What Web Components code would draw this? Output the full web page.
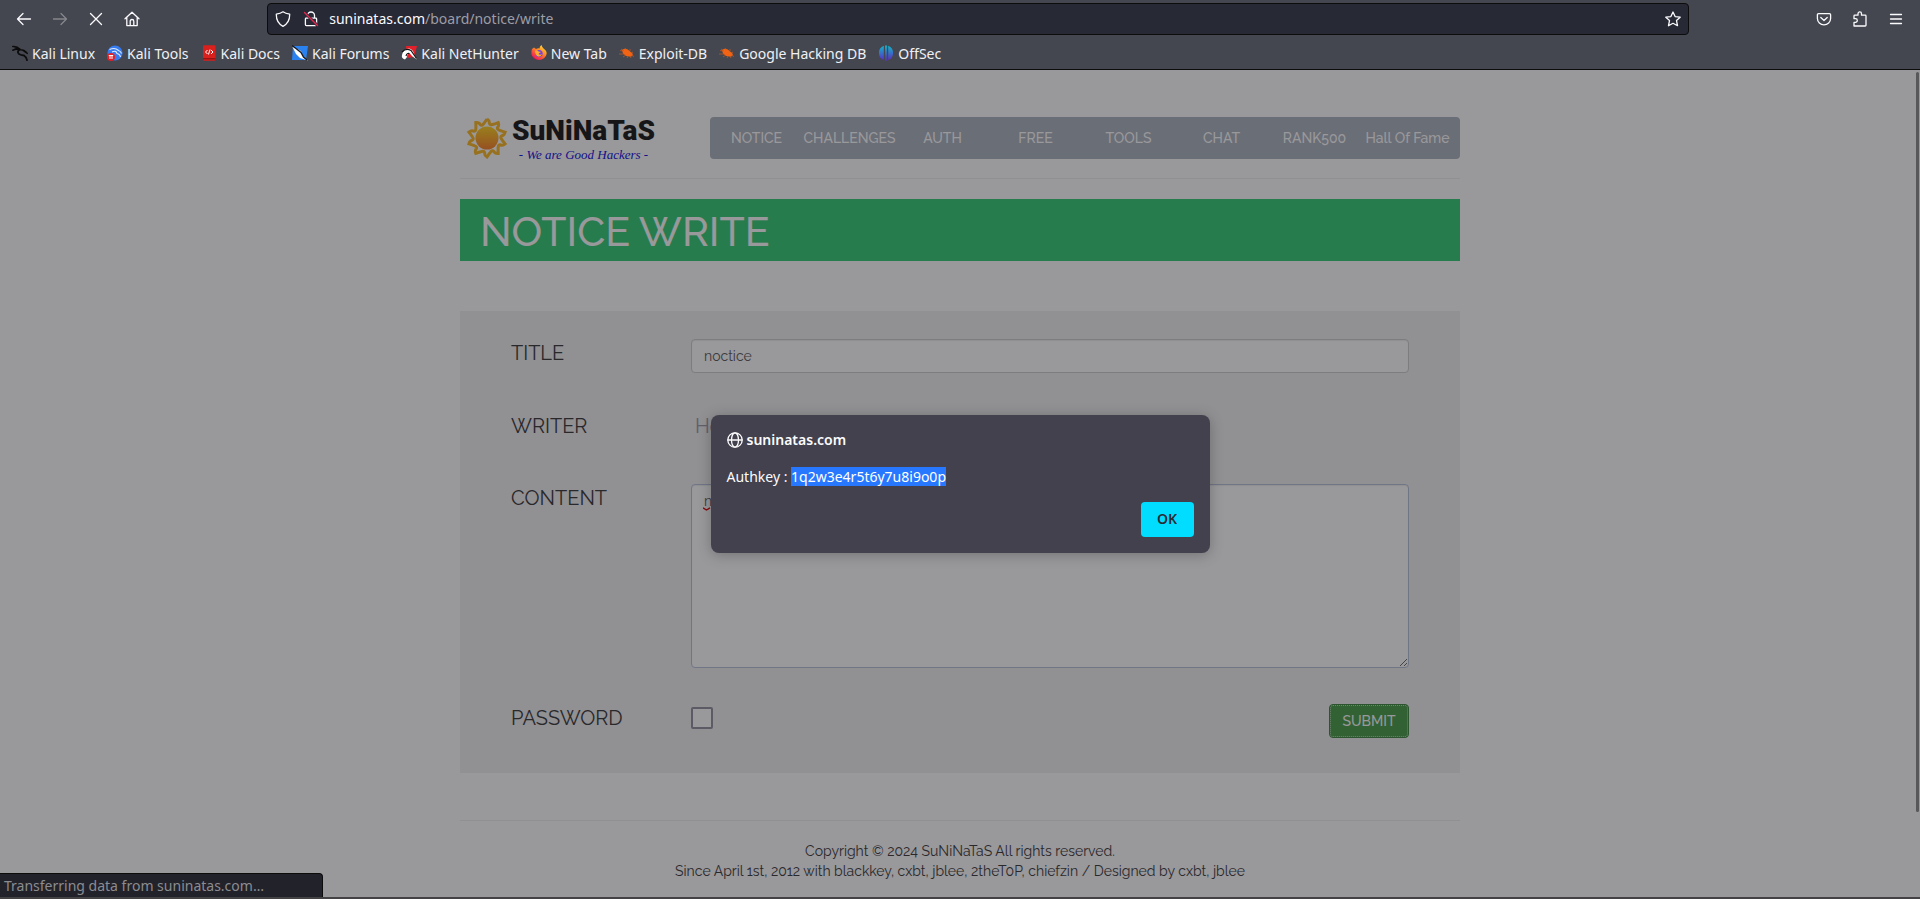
<!DOCTYPE html>
<html lang="en">
<head>
<meta charset="utf-8">
<title>suninatas.com/board/notice/write</title>
<style>
  html, body { margin: 0; height: 100%; }
  body { font-family: "Noto Sans", sans-serif; font-size: 14px; background: #444245; }
</style>
</head>
<body>
<browser-window>
  <nav-toolbar slot="bar"></nav-toolbar>
  <bookmark-bar slot="bar">
    <bookmark-item icon="dragon">Kali Linux</bookmark-item>
    <bookmark-item icon="tools">Kali Tools</bookmark-item>
    <bookmark-item icon="docs">Kali Docs</bookmark-item>
    <bookmark-item icon="forums">Kali Forums</bookmark-item>
    <bookmark-item icon="hunter">Kali NetHunter</bookmark-item>
    <bookmark-item icon="firefox">New Tab</bookmark-item>
    <bookmark-item icon="bug">Exploit-DB</bookmark-item>
    <bookmark-item icon="bug">Google Hacking DB</bookmark-item>
    <bookmark-item icon="offsec">OffSec</bookmark-item>
  </bookmark-bar>
  <site-page>
    <site-header></site-header>
    <page-banner>NOTICE WRITE</page-banner>
    <notice-form></notice-form>
    <site-footer></site-footer>
  </site-page>
  <alert-dialog slot="over" origin="suninatas.com">Authkey : <mark>1q2w3e4r5t6y7u8i9o0p</mark></alert-dialog>
  <status-panel slot="over">Transferring data from suninatas.com…</status-panel>
</browser-window>

<script>
const stroke = 'fill="none" stroke="currentColor" stroke-linecap="round" stroke-linejoin="round"';
const define = (name, html, setup) => {
  const template = document.createElement('template');
  template.innerHTML = html;
  customElements.define(name, class extends HTMLElement {
    constructor() {
      super();
      this.attachShadow({ mode: 'open' }).append(template.content.cloneNode(true));
    }
    connectedCallback() { if (setup) setup(this, this.shadowRoot); }
  });
};

define('browser-window', `
<style>
  :host { display: flex; flex-direction: column; min-height: 100vh; box-sizing: border-box; padding-bottom: 2px; }
  .view { position: relative; flex: 1; background: #fff; border-top: 1px solid #0c0c0d; }
  .thumb { position: absolute; z-index: 2; top: 2px; right: 1px; width: 3px; height: calc(90% - 4px); border-radius: 2px; background: #58585a; }
</style>
<slot name="bar"></slot>
<div class="view"><slot></slot><slot name="over"></slot><div class="thumb"></div></div>`);

define('nav-toolbar', `
<style>
  :host { display: flex; align-items: center; height: 37px; padding: 0 6px; background: #44474f; color: #fbfbfe; }
  button { width: 36px; height: 36px; padding: 0; border: 0; background: none; color: inherit; display: grid; place-items: center; }
  button:disabled { color: #85878c; }
  svg { display: block; }
  .gap { flex: 1; }
  .url { flex: 12; display: flex; align-items: center; box-sizing: border-box; height: 32px; padding: 0 6px 0 7px; border: 1px solid #0c0c0d; border-radius: 4px; background: #272935; }
  .id { display: flex; gap: 12px; margin-right: 10px; }
  .addr { flex: 1; color: #9d9da5; line-height: 20px; }
  b { font-weight: 400; color: #fbfbfe; }
  .url button { width: 18px; }
</style>
<button aria-label="Back"><svg width="16" height="16" ${stroke} stroke-width="1.3"><path d="M7 2.5 1.5 8 7 13.500M1.500 8H14.500"/></svg></button>
<button aria-label="Forward" disabled><svg width="16" height="16" ${stroke} stroke-width="1.3"><path d="M9 2.500 14.500 8 9 13.500M1.500 8H14.500"/></svg></button>
<button aria-label="Stop"><svg width="16" height="16" ${stroke} stroke-width="1.3"><path d="M2.500 2.500 13.500 13.500M13.500 2.500 2.500 13.500"/></svg></button>
<button aria-label="Home"><svg width="16" height="16" ${stroke} stroke-width="1.3"><path d="M1 7.800 8 1.200 15 7.800M2.800 6.500V14.600H13.200V6.500M6.200 14.500V10.200Q6.200 8.500 8 8.500T9.800 10.200V14.500"/></svg></button>
<span class="gap"></span>
<div class="url">
  <span class="id">
    <svg width="16" height="16" ${stroke} stroke-width="1.3"><path d="M8 .8C6 2.300 3.600 2.900 1.300 3.200 1.200 8.800 3.200 13 8 15.300 12.800 13 14.800 8.800 14.700 3.200 12.400 2.900 10 2.300 8 .8Z"/></svg>
    <svg width="16" height="16" ${stroke} stroke-width="1.3"><path d="M4.500 7V4.500a3.500 3.500 0 0 1 7 0V7M3.200 7.200H12.800Q13.600 7.200 13.600 8V13.600Q13.600 14.600 12.600 14.600H3.400Q2.400 14.600 2.400 13.600V8Q2.400 7.200 3.200 7.200"/><path stroke="#272935" stroke-width="3" d="M2 2 14 14"/><path stroke="#e22850" stroke-width="1.400" d="M1.500 1.500 14.500 14.500"/></svg>
  </span>
  <span class="addr"><b>suninatas.com</b>/board/notice/write</span>
  <button aria-label="Bookmark this page"><svg width="16" height="16" ${stroke} stroke-width="1.3"><path d="M8 1 10.100 5.600 15.200 6.200 11.500 9.600 12.500 14.700 8 12.300 3.500 14.700 4.500 9.600.8 6.200 5.900 5.600Z"/></svg></button>
</div>
<span class="gap"></span>
<button aria-label="Save to Pocket"><svg width="16" height="16" ${stroke} stroke-width="1.3"><path d="M2.500 2.600H13.500Q14.600 2.600 14.600 3.700V7.500A6.600 6.300 0 0 1 1.400 7.500V3.700Q1.400 2.600 2.500 2.600ZM4.800 6.500 8 9.500 11.200 6.500"/></svg></button>
<button aria-label="Extensions"><svg width="16" height="16" ${stroke} stroke-width="1.3"><path d="M2 15V11.300H3.500A1.700 1.700 0 0 0 3.500 7.700H2V5Q2 4.200 2.800 4.200H6V2.700A1.700 1.700 0 0 1 9.500 2.700V4.200H13.200Q14 4.200 14 5V14.200Q14 15 13.200 15Z"/></svg></button>
<button aria-label="Menu"><svg width="16" height="16" ${stroke} stroke-width="1.3"><path d="M2.500 3.500H13.500M2.500 8H13.500M2.500 12.500H13.500"/></svg></button>`);

define('bookmark-bar', `
<style>
  :host { display: flex; align-items: center; gap: 12px; height: 32px; padding: 0 12px; background: #44474f; color: #f0f0f4; }
</style><slot></slot>`);

const icons = {
  dragon: '<g fill="none" stroke="#0c0c0c" stroke-linecap="round"><path stroke-width="1.600" d="M.8 1.500Q5 1 8 4.200M.8 5.200Q4 3.500 8 4.800Q12 4.500 14.500 7.500"/><path stroke-width="1.800" d="M7.500 4.500Q4.500 7 7 9 9 10.300 12 10.500 14.500 12 15 15.200"/><path stroke-width="1.200" d="M11 5.500Q13 7 15.500 8.500M3 3 6 4"/></g>',
  tools: '<circle cx="8" cy="8" r="7.600" fill="#367bf0"/><path d="M2.500 4.500Q8 2 11.500 5.500 14 6.500 14.500 8.500M5 7Q9 5 10 8.500 13 9 13.500 12" fill="none" stroke="#dfeaff" stroke-width="1.100"/><circle cx="4" cy="12" r="4" fill="#e22028"/><path d="M1.800 10.500H6.200M3 10.500V14M5 10.500V14" stroke="#fff"/>',
  docs: '<rect x="2" y=".2" width="12.500" height="15.600" rx="1" fill="#d9201c"/><path d="M2 13.800H14.500" stroke="#7c0d0d"/><path d="M6.500 5 4.500 7 6.500 9M10 5 12 7 10 9M9 4.500 7.500 9.500" fill="none" stroke="#fff"/>',
  forums: '<path d="M1 1H16L14 15H0Z" fill="#2a82f0"/><path d="M0 1 9 6 11 11 16 15.500 8 13 4 9Z" fill="#fff"/><path d="M0 .5 4 3.500 9 7.500 11.500 12 15 15" stroke="#16181f" stroke-width="1.400" fill="none"/>',
  hunter: '<path d="M5 1H16L13 12 6 13Z" fill="#e3202a"/><path d="M1 10Q2 4 8 3.500 12 4 13 9L16 14.500Q10 11 9 8.500 6 8 6 12L4 14.500Q0 13 1 10Z" fill="#fff"/><path d="M1 7Q5 2.500 10 5.500L15.500 13.500M5 11Q6 7.500 8.500 8.500" stroke="#141414" stroke-width="1.200" fill="none"/>',
  firefox: '<defs><linearGradient id="f" x1="1" y1="0" x2=".3" y2="1"><stop offset="0" stop-color="#fff44f"/><stop offset=".45" stop-color="#ff9022"/><stop offset="1" stop-color="#f0145a"/></linearGradient></defs><path d="M1 4 3 2.500 5 4Q7 3 8.500 3.500 8.500 1 10.500 0 11 2.500 13 4 16 6 15.600 9A7.700 7 0 0 1 .4 9Q.2 6 1 4Z" fill="url(#f)"/><circle cx="8" cy="8.500" r="3.600" fill="#7542e5"/><path d="M4 6Q6 4.500 7.500 6.500L10 7Q8 8 7.500 9 9 10.500 11 9 10 12 7 11.500 4 10 4 6Z" fill="#ffad2a"/>',
  bug: '<path d="M3 5Q7 2.500 10 5.500L13.500 8.500Q14.500 11 11.500 11.500 7 12 4 8.500Z" fill="#f26414"/><path d="M1 5.500 4 6M0 9H5M4 12 7 10M8 13 9 11M12 13 11 11M6 3 7 5M11 4 11 6M14 7 12 8M15 11.500 12 10M2 4 5 6" stroke="#c95a20" stroke-width=".7"/>',
  offsec: '<defs><linearGradient id="o" x1="0" y1="0" x2="0" y2="1"><stop offset="0" stop-color="#12b5c9"/><stop offset="1" stop-color="#5a2fc8"/></linearGradient></defs><g fill="url(#o)"><path d="M5.800.8V15A7.600 7.600 0 0 1 5.800.8ZM10.200.8V15A7.600 7.600 0 0 0 10.200.8Z"/><path d="M7 .4H9L8.600 16H7.400Z"/></g>'
};
define('bookmark-item', `
<style>
  a { display: flex; align-items: center; gap: 4px; color: inherit; text-decoration: none; line-height: 20px; white-space: nowrap; }
  span { padding-top: 2px; }
</style>
<a href="#"><svg width="16" height="16" viewBox="0 0 16 16"></svg><span><slot></slot></span></a>`,
(host, root) => { root.querySelector('svg').innerHTML = icons[host.getAttribute('icon')]; });

define('site-page', `
<style>
  :host { display: block; max-width: 1000px; margin: 0 auto; font-family: Raleway, Lato, sans-serif; font-size: 14px; color: #333; }
</style><slot></slot>`);

define('site-header', `
<style>
  :host { display: flex; align-items: flex-start; justify-content: space-between; padding: 47px 0 11px; border-bottom: 1px solid #eee; }
  .logo { display: flex; gap: 4px; padding-left: 6px; height: 50px; color: #111; text-decoration: none; }
  .name { display: block; font: 900 28px/28px Roboto, sans-serif; }
  .tag { display: block; text-align: center; font: italic 13px/20px "Liberation Serif", serif; color: #0808e0; }
  nav { display: grid; grid-template-columns: repeat(8, 1fr); width: 75%; box-sizing: border-box; height: 42px; padding-right: 6px; border-radius: 4px; background: #aab2bd; }
  nav a { text-align: center; line-height: 42px; font-size: 14px; font-weight: 500; white-space: nowrap; color: #fff; text-decoration: none; }
</style>
<a class="logo" href="#">
  <svg width="42" height="42" viewBox="-21 -21 42 42"><defs><linearGradient id="s" x1="0" y1="0" x2="0" y2="1"><stop offset="0" stop-color="#ffd21a"/><stop offset="1" stop-color="#fb7d22"/></linearGradient></defs>
  <g fill="none" stroke="#fbb91e" stroke-width="3"><path class="ray"/></g><circle r="11.500" fill="url(#s)"/></svg>
  <span><span class="name">SuNiNaTaS</span><span class="tag">- We are Good Hackers -</span></span>
</a>
<nav><a href="#">NOTICE</a><a href="#">CHALLENGES</a><a href="#">AUTH</a><a href="#">FREE</a><a href="#">TOOLS</a><a href="#">CHAT</a><a href="#">RANK500</a><a href="#">Hall Of Fame</a></nav>`,
(host, root) => {
  // Wavy corona: ten curled tips round the disc.
  let d = '';
  for (let i = 0; i <= 10; i++) {
    const p = (r, t) => { const a = (i + t) * Math.PI / 5; return (r * Math.sin(a)).toFixed(1) + ' ' + (-r * Math.cos(a)).toFixed(1); };
    d += i ? `Q${p(13, -.65)} ${p(14.5, -.4)}Q${p(16, -.2)} ${p(19, 0)}` : `M${p(19, 0)}`;
    if (i < 10) d += `Q${p(17.5, .25)} ${p(15, .25)}`;
  }
  root.querySelector('.ray').setAttribute('d', d);
});

define('page-banner', `
<style>
  :host { display: block; margin-top: 20px; padding: 4px 20px 0; background: #2ecc71; color: #fff; }
  h1 { margin: 0; font-weight: 500; font-size: 41px; line-height: 58px; }
</style><h1><slot></slot></h1>`);

define('notice-form', `
<style>
  :host { display: block; margin-top: 50px; padding: 28px 51px 35px; background: #f0f0f0; }
  form { display: grid; grid-template-columns: 180px 1fr; grid-template-rows: 34px 39px 184px 34px; row-gap: 36px; }
  label { font-size: 20px; line-height: 28px; }
  .label, .who { font-size: 20px; line-height: 34px; }
  .who { padding-left: 4px; color: #99a; }
  input[type=text], textarea { box-sizing: border-box; width: 100%; height: 34px; margin: 0; padding: 6px 12px; border: 1px solid #ccc; border-radius: 4px; background: #fff; color: #555; font: 14px/20px Raleway, Lato, sans-serif; box-shadow: inset 0 1px 1px rgba(0,0,0,.075); }
  .area { position: relative; }
  textarea { height: 184px; border-color: #b4c2d8; display: block; }
  .wave { position: absolute; left: 12px; top: 23px; }
  .end { display: flex; justify-content: space-between; align-items: flex-start; }
  input[type=checkbox] { appearance: none; box-sizing: border-box; width: 22px; height: 22px; margin: 3px 0 0; border: 2px solid #8f8f9d; border-radius: 2px; background: #fff; }
  button { box-sizing: border-box; width: 80px; height: 34px; padding: 0; border: 1px solid #398439; border-radius: 4px; background: #449d44; color: #fff; font: 500 14px/20px Raleway, Lato, sans-serif; outline: 1px dotted rgba(255,255,255,.6); outline-offset: -2px; }
</style>
<form onsubmit="return false">
  <label for="title">TITLE</label><input id="title" type="text" value="noctice">
  <span class="label">WRITER</span><span class="who">Ho</span>
  <label for="content">CONTENT</label>
  <div class="area"><textarea id="content">n</textarea><svg class="wave" width="8" height="4" fill="none" stroke="#e00000" stroke-width="1.400"><path d="M0 .8 3.500 3 7 .8"/></svg></div>
  <label for="secret">PASSWORD</label>
  <div class="end"><input id="secret" type="checkbox"><button>SUBMIT</button></div>
</form>`);

define('site-footer', `
<style>
  :host { display: block; margin-top: 47px; padding: 20px 0 16px; border-top: 1px solid #eee; text-align: center; line-height: 20px; }
  p { margin: 0; }
</style>
<p>Copyright © 2024 SuNiNaTaS All rights reserved.</p>
<p>Since April 1st, 2012 with blackkey, cxbt, jblee, 2theT0P, chiefzin / Designed by cxbt, jblee</p>`);

define('alert-dialog', `
<style>
  :host { position: absolute; inset: 0; display: grid; place-items: center; background: rgba(28,27,34,.45); }
  section { box-sizing: border-box; width: 499px; padding: 16px; border-radius: 8px; background: #42414d; color: #fbfbfe; box-shadow: 0 2px 14px rgba(0,0,0,.25); }
  h2 { display: flex; align-items: center; gap: 4px; margin: 0 0 18px; font-size: 14px; line-height: 18px; font-weight: 600; }
  p { margin: 0 0 16px; line-height: 19px; font-size: 14px; }
  ::slotted(mark) { display: inline-block; background: #2777ff; color: #fff; }
  button { display: block; margin-left: auto; width: 53px; height: 35px; padding: 0; border: 0; border-radius: 4px; background: #0df; color: #2b2a33; font: 600 14px/20px "Noto Sans", sans-serif; }
</style>
<section role="alertdialog" aria-labelledby="who">
  <h2 id="who"><svg width="16" height="16" ${stroke} stroke-width="1.300"><circle cx="8" cy="8" r="7.200"/><ellipse cx="8" cy="8" rx="3.500" ry="7.200"/><path d="M1 8H15"/></svg><span></span></h2>
  <p><slot></slot></p>
  <button>OK</button>
</section>`,
(host, root) => { root.querySelector('h2 span').textContent = host.getAttribute('origin'); });

define('status-panel', `
<style>
  :host { position: absolute; left: 0; bottom: 0; box-sizing: border-box; width: 323px; height: 24px; padding-left: 4px; border: 1px solid #0c0c0d; border-width: 1px 1px 0 0; border-radius: 0 4px 0 0; background: #22222b; color: #8c8c90; line-height: 24px; white-space: nowrap; }
</style><slot></slot>`);
</script>
</body>
</html>
